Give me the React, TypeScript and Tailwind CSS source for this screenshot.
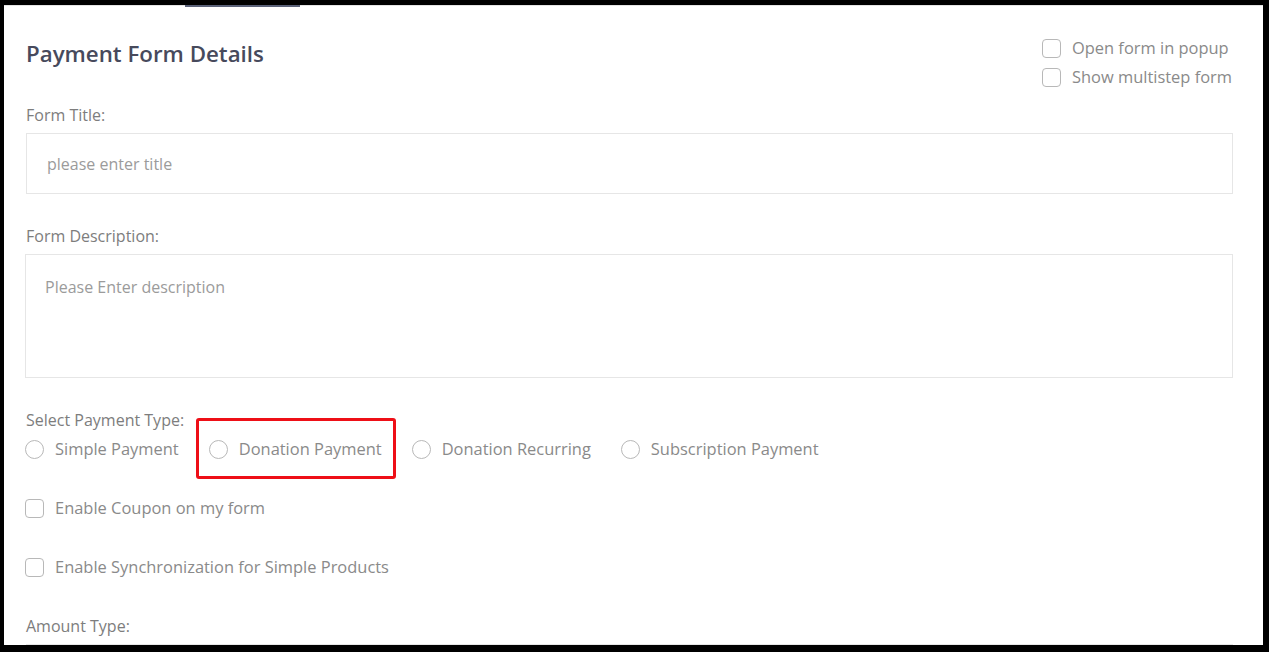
import React from 'react';

const font = { fontFamily: '"Open Sans", "Noto Sans", sans-serif' };

const Radio = ({ label }: { label: string }) => (
  <div className="flex items-center h-[24px]">
    <span className="w-[19px] h-[19px] rounded-full border border-[#b8b8b8] bg-white mr-[11px] shrink-0" />
    <span className="text-[16.45px] text-[#8a8a8a] whitespace-nowrap">{label}</span>
  </div>
);

const Check = ({ label }: { label: string }) => (
  <div className="flex items-center h-[24px]">
    <span className="w-[19px] h-[19px] rounded-[4px] border border-[#b8b8b8] bg-white mr-[11px] shrink-0" />
    <span className="text-[16.45px] text-[#8a8a8a] whitespace-nowrap">{label}</span>
  </div>
);

const App = () => {
  return (
    <div className="w-[1269px] h-[652px] bg-black pt-[5px] pl-[4px] pr-[6px] pb-[7px]" style={font}>
      <div className="w-full h-full bg-white overflow-hidden">
        <div className="h-[2px] border-t border-[#e4e4e4] relative">
          <div className="absolute left-[181px] top-[-1px] w-[115px] h-[2px] bg-[#5a6178]" />
        </div>
        <div className="pl-[22px] pr-[30px]">
          <div className="flex justify-between items-start pt-[27px]">
            <h2 className="mt-[5px] text-[22.3px] leading-[30px] font-semibold text-[#474a5c]">Payment Form Details</h2>
            <div className="flex flex-col mr-[1px]">
              <div className="h-[29px] flex items-center"><Check label="Open form in popup" /></div>
              <div className="h-[29px] flex items-center"><Check label="Show multistep form" /></div>
            </div>
          </div>

          <div className="mt-[11px] text-[16px] leading-[24px] text-[#7d7d7d]">Form Title:</div>
          <div className="mt-[6px] h-[61px] border border-[#e6e6e6] flex items-center pl-[20px] text-[16px] text-[#9b9b9b]">
            please enter title
          </div>

          <div className="mt-[30px] text-[16px] leading-[24px] text-[#7d7d7d]">Form Description:</div>
          <div className="mt-[6px] h-[124px] border border-[#e6e6e6] pl-[19px] pt-[20px] text-[16px] leading-[24px] text-[#9b9b9b] -ml-[1px]">
            Please Enter description
          </div>

          <div className="mt-[30px] text-[16px] leading-[24px] text-[#7d7d7d]">Select Payment Type:</div>
          <div className="mt-[5px] flex items-center gap-[30px] -ml-[1px]">
            <Radio label="Simple Payment" />
            <div className="relative">
              <div className="absolute -left-[13px] -right-[14px] -top-[19px] -bottom-[18px] border-[3px] border-[#ee0f17] rounded-[3px]" />
              <Radio label="Donation Payment" />
            </div>
            <Radio label="Donation Recurring" />
            <Radio label="Subscription Payment" />
          </div>

          <div className="mt-[35px] -ml-[1px]"><Check label="Enable Coupon on my form" /></div>
          <div className="mt-[35px] -ml-[1px]"><Check label="Enable Synchronization for Simple Products" /></div>

          <div className="mt-[35px] text-[16px] leading-[24px] text-[#7d7d7d]">Amount Type:</div>
          <div className="mt-[6px] h-[61px] border border-[#e6e6e6]" />
        </div>
      </div>
    </div>
  );
};

export default App;
